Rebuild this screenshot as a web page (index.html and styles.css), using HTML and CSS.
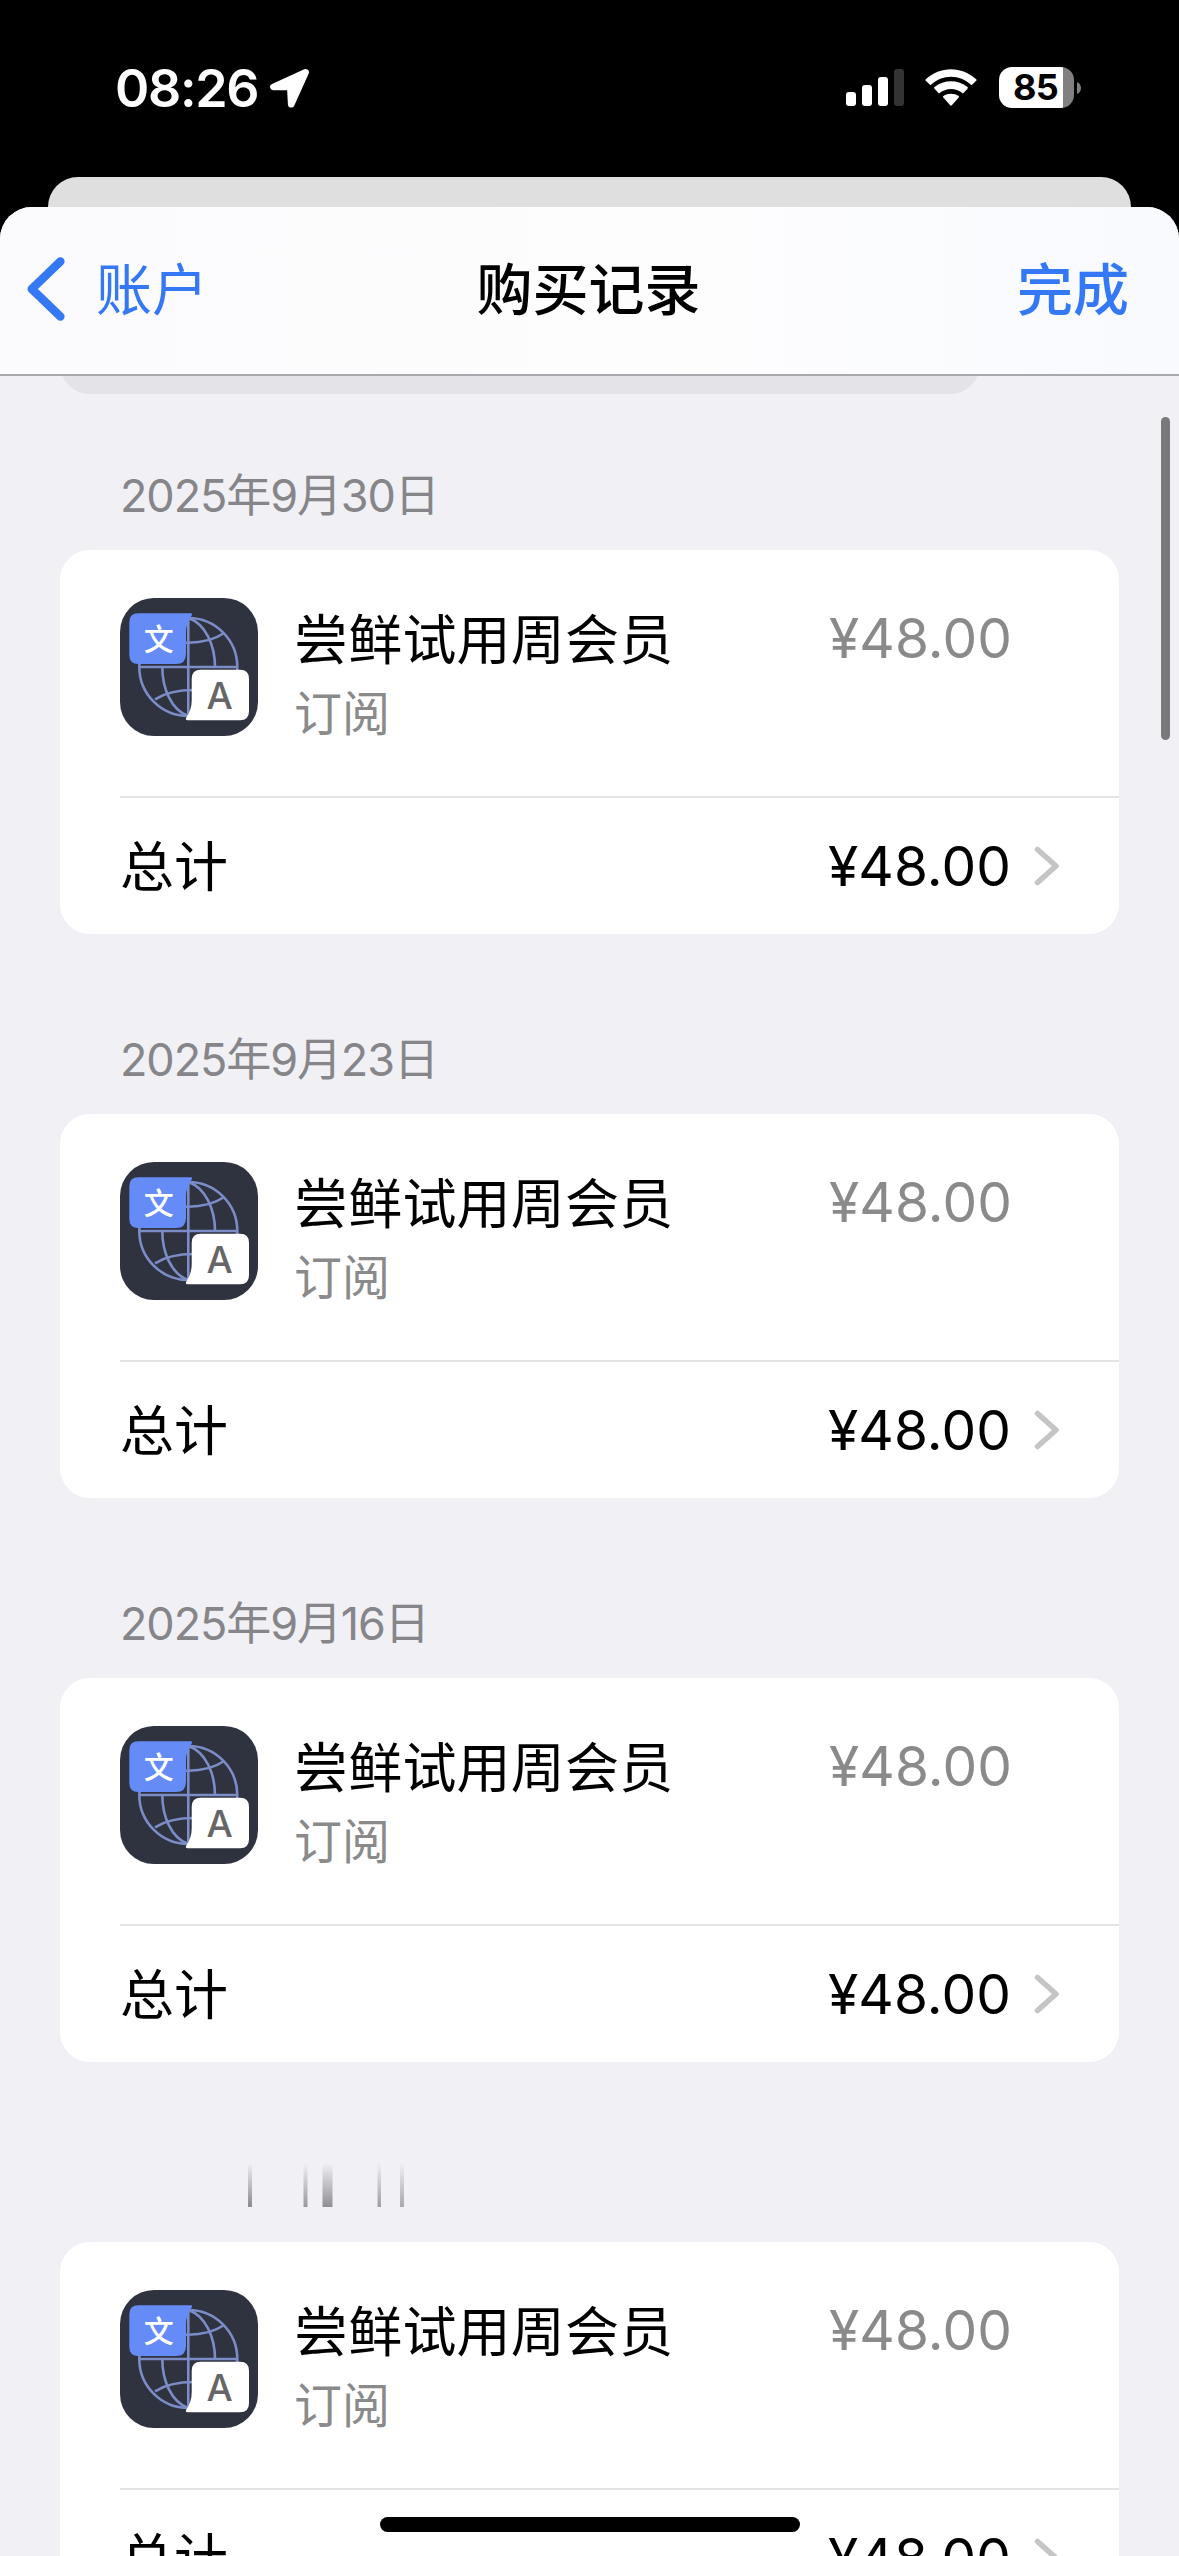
FILE: index.html
```html
<!DOCTYPE html>
<html lang="zh-CN">
<head>
<meta charset="utf-8">
<title>购买记录</title>
<link rel="stylesheet" href="styles.css">
</head>
<body>
<svg width="0" height="0" class="defs" aria-hidden="true">
  <defs>
    <linearGradient id="fade" x1="0" y1="0" x2="0" y2="1">
      <stop offset="0" stop-color="#8a8a8e" stop-opacity="0"/>
      <stop offset="1" stop-color="#8a8a8e"/>
    </linearGradient>
    <symbol id="app" viewBox="0 0 138 138">
      <rect width="138" height="138" rx="34" fill="#2f323f"/>
      <g fill="none" stroke="#7b8cc6" stroke-width="2.6">
        <circle cx="68.3" cy="69" r="49"/>
        <path d="M68.3 20V118M19.3 69H117.7"/>
        <path d="M68.3 20C86 26 95 48 95 69M68.3 118C51 112 42.3 90 42.3 69"/>
        <path d="M103.7 35.3C94 42 82 45 66 44.7M35 101.3C44 95.500 57 92 74 92"/>
      </g>
      <path d="M18.300 15.300H71Q73 15.300 71.500 17.800Q66 26 66 34V56Q66 66 56 66H18.300Q9.300 66 9.300 57V24.300Q9.300 15.300 18.300 15.300Z" fill="#658bf7"/>
      <path d="M80.700 71.700H120Q129 71.700 129 80.700V113.300Q129 122.300 120 122.300H67.500Q65 122.300 66.300 119.500Q71.700 112 71.700 102V80.700Q71.700 71.700 80.700 71.700Z" fill="#fff"/>
      <text x="38.700" y="51.500" class="glyph-zh">文</text>
      <text x="99.700" y="110.800" class="glyph-en">A</text>
    </symbol>
    <symbol id="next" viewBox="0 0 26 40">
      <path d="M3.500 3.500L22 20L3.500 36.500" fill="none" stroke="#c5c5c7" stroke-width="5.600" stroke-linecap="round" stroke-linejoin="round"/>
    </symbol>
  </defs>
</svg>
<div class="screen">
  <header class="status">
    <div class="clock">
      <span class="time">08:26</span>
      <svg class="locate" viewBox="0 0 40 40"><path d="M35.600 4.300L3.400 18.900L20.300 19L21.200 36.300Z" fill="#fff" stroke="#fff" stroke-width="6.600" stroke-linejoin="round"/></svg>
    </div>
    <div class="indicators">
      <svg class="signal" viewBox="0 0 58 38">
        <rect x="0" y="23" width="10" height="14" rx="3" fill="#fff"/>
        <rect x="16" y="16" width="10" height="21" rx="3" fill="#fff"/>
        <rect x="32" y="8" width="10" height="29" rx="3" fill="#fff"/>
        <rect x="48" y="0" width="10" height="37" rx="3" fill="#333"/>
      </svg>
      <svg class="wifi" viewBox="0 0 52 38" fill="#fff">
        <path d="M.8 11.800Q0 11 .8 10.200C15-3.200 37-3.200 51.200 10.200Q52 11 51.200 11.800L46.500 16.300C34.500 5 17.500 5 5.500 16.300Z"/>
        <path d="M9.500 19.700Q8.600 18.900 9.500 18.100C19 10.300 33 10.300 42.500 18.100Q43.400 18.900 42.500 19.700L38 24.500C31 18.400 21 18.400 14 24.500Z"/>
        <path d="M18.300 28.600Q17.500 27.800 18.400 27.100C22.800 24 29.200 24 33.600 27.100Q34.500 27.800 33.700 28.600L26.800 36.300Q26 37.200 25.200 36.300Z"/>
      </svg>
      <div class="battery"><span class="level">85</span></div>
      <svg class="nub" viewBox="0 0 4 12"><path d="M0 0Q4 2 4 6T0 12Z" fill="#808080"/></svg>
    </div>
  </header>
  <div class="under-sheet"></div>
  <main class="sheet">
    <nav class="nav">
      <div class="back">
        <svg viewBox="0 0 38 64"><path d="M33.300 4.500L4.800 32L33.300 59.500" fill="none" stroke="#3478f6" stroke-width="8.600" stroke-linecap="round" stroke-linejoin="round"/></svg>
        <span>账户</span>
      </div>
      <h1>购买记录</h1>
      <span class="done">完成</span>
    </nav>
    <div class="content">
      <div class="search"><div class="field"></div></div>
      <section class="record">
        <h2>2025年9月30日</h2>
        <div class="card">
          <div class="item">
            <svg class="app"><use href="#app"/></svg>
            <div class="info"><div class="name">尝鲜试用周会员</div><div class="kind">订阅</div></div>
            <div class="price">¥48.00</div>
          </div>
          <div class="total"><span class="label">总计</span><span class="price">¥48.00</span><svg class="next"><use href="#next"/></svg></div>
        </div>
      </section>
      <section class="record">
        <h2>2025年9月23日</h2>
        <div class="card">
          <div class="item">
            <svg class="app"><use href="#app"/></svg>
            <div class="info"><div class="name">尝鲜试用周会员</div><div class="kind">订阅</div></div>
            <div class="price">¥48.00</div>
          </div>
          <div class="total"><span class="label">总计</span><span class="price">¥48.00</span><svg class="next"><use href="#next"/></svg></div>
        </div>
      </section>
      <section class="record">
        <h2>2025年9月16日</h2>
        <div class="card">
          <div class="item">
            <svg class="app"><use href="#app"/></svg>
            <div class="info"><div class="name">尝鲜试用周会员</div><div class="kind">订阅</div></div>
            <div class="price">¥48.00</div>
          </div>
          <div class="total"><span class="label">总计</span><span class="price">¥48.00</span><svg class="next"><use href="#next"/></svg></div>
        </div>
      </section>
      <section class="record">
        <h2><svg class="streaks" viewBox="0 0 300 44" fill="url(#fade)">
          <rect x="128" width="4" height="44"/>
          <rect x="183.500" width="4" height="44" opacity=".85"/>
          <rect x="202.500" width="10" height="44" opacity=".95"/>
          <rect x="257.500" width="3.500" height="44" opacity=".8"/>
          <rect x="280" width="4" height="44" opacity=".7"/>
        </svg></h2>
        <div class="card">
          <div class="item">
            <svg class="app"><use href="#app"/></svg>
            <div class="info"><div class="name">尝鲜试用周会员</div><div class="kind">订阅</div></div>
            <div class="price">¥48.00</div>
          </div>
          <div class="total"><span class="label">总计</span><span class="price">¥48.00</span><svg class="next"><use href="#next"/></svg></div>
        </div>
      </section>
      <div class="scrollbar"></div>
    </div>
  </main>
  <div class="home"></div>
</div>
</body>
</html>
```
FILE: styles.css
```css
* { box-sizing: border-box; }
body { margin: 0; background: #000; font-family: Inter, "Noto Sans CJK SC", sans-serif; color: #000; }
svg { display: block; flex: none; }
h1, h2 { margin: 0; font-weight: 400; }
.defs { position: absolute; }
.screen { position: relative; width: 1179px; height: 2556px; overflow: hidden; background: #000; display: flex; flex-direction: column; }

.status { height: 177px; display: flex; justify-content: space-between; align-items: flex-start; padding: 67px 98px 0 115px; color: #fff; }
.clock { display: flex; align-items: flex-start; padding-top: 1px; height: 42px; }
.time { width: 155px; font-size: 52px; font-weight: 600; line-height: 41px; letter-spacing: -1.3px; white-space: nowrap; }
.locate { width: 40px; height: 40px; }
.indicators { display: flex; align-items: flex-start; }
.signal { width: 58px; height: 38px; margin: 2px 21px 0 0; }
.wifi { width: 52px; height: 38px; margin: 2px 22px 0 0; }
.battery { width: 75px; height: 41px; border-radius: 13px; background: linear-gradient(90deg, #fff 64px, #808080 64px); display: flex; align-items: center; padding-left: 14px; }
.level { color: #000; font-size: 36px; font-weight: 700; line-height: 41px; letter-spacing: -.8px; }
.nub { width: 4px; height: 12px; margin: 15px 0 0 3px; }

.under-sheet { height: 60px; margin: 0 48px -30px; background: #dfdfdf; border-radius: 30px 30px 0 0; flex: none; }
.sheet { position: relative; flex: 1; min-height: 0; border-radius: 32px 32px 0 0; background: #f1f0f5; overflow: hidden; }
.nav { height: 169px; display: grid; grid-template-columns: 1fr auto 1fr; align-items: center; padding: 0 29px 2px 27px; background: linear-gradient(90deg, #fbfbfd, #fdfdfe 60%, #f8fafe); border-bottom: 2px solid #a9a9ad; color: #3478f6; font-size: 56px; line-height: 80px; }
.back { display: flex; align-items: center; gap: 31px; }
.back svg { width: 38px; height: 64px; margin-bottom: 2px; }
.nav h1 { color: #000; font-size: 56px; font-weight: 500; }
.done { padding-right: 21px; text-align: right; font-weight: 500; }

.content { padding: 0 60px; }
.search { height: 18px; display: flex; align-items: flex-end; overflow: hidden; }
.field { width: 920px; height: 108px; flex: none; border-radius: 30px; background: #e4e3e8; }
.record { height: 564px; }
.record h2 { height: 156px; padding: 74px 0 0 60px; color: #85858a; font-size: 45px; line-height: 56px; letter-spacing: -1.1px; white-space: nowrap; }
.record + .record h2 { height: 180px; padding-top: 98px; }
.search + .record { height: 540px; }
.streaks { width: 300px; height: 44px; margin-top: 3px; }
.card { height: 384px; border-radius: 30px; background: #fff; }
.item { height: 248px; margin-left: 60px; padding: 48px 107px 0 0; display: flex; align-items: flex-start; border-bottom: 2px solid #e3e3e4; }
.app { width: 138px; height: 138px; }
.glyph-zh { font: 500 30px "Noto Sans CJK SC", sans-serif; fill: #fff; text-anchor: middle; }
.glyph-en { font: 500 37px Inter, sans-serif; fill: #666; text-anchor: middle; }
.info { flex: 1; padding: 3px 0 0 36px; }
.name { font-size: 54px; line-height: 80px; letter-spacing: .2px; }
.kind { font-size: 48px; line-height: 66px; color: #8a8a8a; }
.price { font-size: 55px; line-height: 64px; letter-spacing: .1px; }
.item .price { color: #8a8a8a; margin-top: 8px; }
.total { height: 136px; padding: 0 59px 0 60px; display: flex; align-items: center; }
.label { flex: 1; font-size: 54px; line-height: 80px; padding-top: 3px; }
.next { width: 26px; height: 40px; margin-left: 23px; }
.scrollbar { position: absolute; right: 9px; top: 210px; width: 9px; height: 323px; border-radius: 5px; background: #79797c; }
.home { position: absolute; left: 380px; top: 2517px; width: 420px; height: 15px; border-radius: 8px; background: #000; }
```
